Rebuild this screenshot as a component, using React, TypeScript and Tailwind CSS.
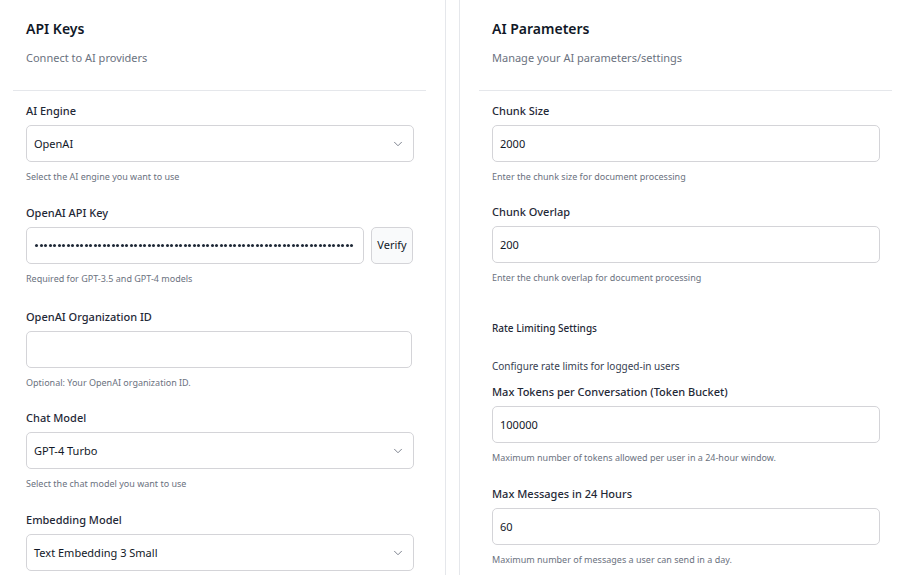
import { ChevronDown } from "lucide-react";
import { ReactNode } from "react";

const font = { fontFamily: '"Noto Sans", "Open Sans", sans-serif' };

type FieldProps = {
  label: string;
  help?: string;
  children: ReactNode;
  spaceAfter?: string;
};

const Field = ({ label, help, children, spaceAfter = "mb-[21px]" }: FieldProps) => (
  <div className={spaceAfter}>
    <div className="h-[16px] leading-[16px] text-[11px] font-medium text-[#1f2937]">{label}</div>
    <div className="mt-[6px]">{children}</div>
    {help && <div className="mt-[8px] h-[14px] leading-[14px] text-[9px] text-[#6b7280]">{help}</div>}
  </div>
);

const SelectBox = ({ value }: { value: string }) => (
  <div className="flex h-[37px] w-[388px] items-center justify-between rounded-[5px] border border-[#d4d4d8] bg-white pl-[7px] pr-[8px] pt-px text-[11px] text-[#111827]">
    <span>{value}</span>
    <ChevronDown size={14} strokeWidth={1.5} className="text-[#6b7280]" />
  </div>
);

const TextBox = ({ value = "", width = "w-[388px]" }: { value?: string; width?: string }) => (
  <div className={`flex h-[37px] ${width} items-center rounded-[5px] border border-[#d4d4d8] bg-white px-[7px] pt-px text-[11px] text-[#111827]`}>
    {value}
  </div>
);

const Header = ({ title, subtitle }: { title: string; subtitle: string }) => (
  <div className="pt-[20px]">
    <div className="h-[18px] leading-[18px] text-[14px] font-semibold text-[#111827]">{title}</div>
    <div className="mt-[12px] h-[16px] leading-[16px] text-[11px] text-[#6b7280]">{subtitle}</div>
  </div>
);

export default function App() {
  return (
    <div className="flex h-[575px] w-[902px] overflow-hidden bg-white" style={font}>
      {/* left card */}
      <div className="w-[446px] shrink-0 border-r border-[#e5e7eb]">
        <div className="pl-[26px]">
          <Header title="API Keys" subtitle="Connect to AI providers" />
        </div>
        <div className="ml-[13px] mt-[24px] h-px w-[413px] bg-[#e5e7eb]" />
        <div className="pl-[26px] pt-[12px]">
          <Field label="AI Engine" help="Select the AI engine you want to use">
            <SelectBox value="OpenAI" />
          </Field>
          <Field label="OpenAI API Key" help="Required for GPT-3.5 and GPT-4 models" spaceAfter="mb-[23px]">
            <div className="flex w-[387px] gap-[7px]">
              <div className="flex h-[37px] flex-1 items-center gap-[1.5px] overflow-hidden rounded-[5px] border border-[#d4d4d8] bg-white px-[8px]">
                {Array.from({ length: 71 }).map((_, i) => (
                  <span key={i} className="h-[3px] w-[3px] shrink-0 rounded-full bg-[#1f2937]" />
                ))}
              </div>
              <button className="h-[37px] w-[42px] rounded-[5px] border border-[#d4d4d8] bg-[#f9fafb] text-[11px] text-[#111827]">
                Verify
              </button>
            </div>
          </Field>
          <Field label="OpenAI Organization ID" help="Optional: Your OpenAI organization ID." spaceAfter="mb-[20px]">
            <TextBox width="w-[386px]" />
          </Field>
          <Field label="Chat Model" help="Select the chat model you want to use">
            <SelectBox value="GPT-4 Turbo" />
          </Field>
          <Field label="Embedding Model" spaceAfter="mb-0">
            <SelectBox value="Text Embedding 3 Small" />
          </Field>
        </div>
      </div>

      <div className="w-[13px] shrink-0" />

      {/* right card */}
      <div className="w-[460px] shrink-0 border-l border-[#e5e7eb]">
        <div className="pl-[32px]">
          <Header title="AI Parameters" subtitle="Manage your AI parameters/settings" />
        </div>
        <div className="ml-[19px] mt-[24px] h-px w-[413px] bg-[#e5e7eb]" />
        <div className="pl-[32px] pt-[12px]">
          <Field label="Chunk Size" help="Enter the chunk size for document processing" spaceAfter="mb-[20px]">
            <TextBox value="2000" />
          </Field>
          <Field label="Chunk Overlap" help="Enter the chunk overlap for document processing" spaceAfter="mb-0">
            <TextBox value="200" />
          </Field>
          <div className="mt-[36px] h-[14px] leading-[14px] text-[10px] font-medium text-[#1f2937]">
            Rate Limiting Settings
          </div>
          <div className="mt-[24px] h-[14px] leading-[14px] text-[10px] text-[#374151]">
            Configure rate limits for logged-in users
          </div>
          <div className="mt-[11px]">
            <Field label="Max Tokens per Conversation (Token Bucket)" help="Maximum number of tokens allowed per user in a 24-hour window." spaceAfter="mb-[21px]">
              <TextBox value="100000" />
            </Field>
            <Field label="Max Messages in 24 Hours" help="Maximum number of messages a user can send in a day.">
              <TextBox value="60" />
            </Field>
          </div>
        </div>
      </div>
    </div>
  );
}
